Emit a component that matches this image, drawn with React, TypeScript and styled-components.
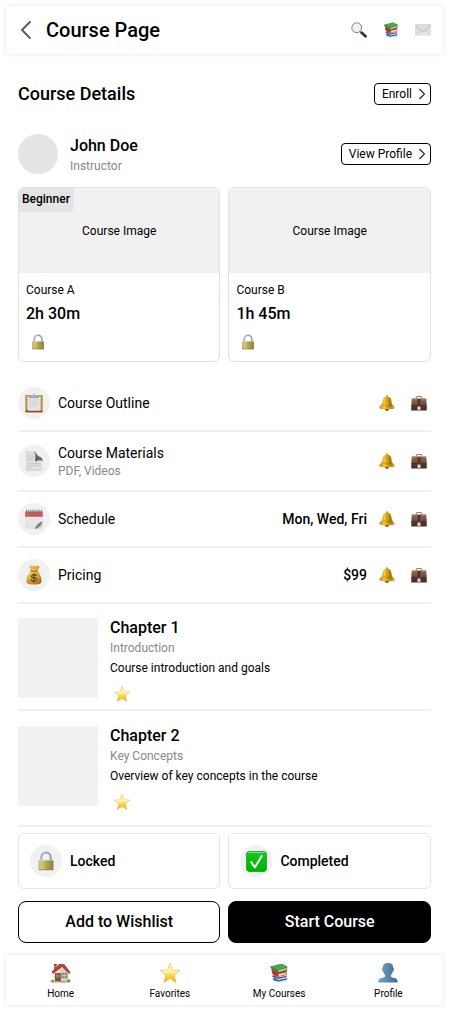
import React from "react";
import styled, { createGlobalStyle } from "styled-components";

const GlobalStyle = createGlobalStyle`
  * { box-sizing: border-box; }
  body { margin: 0; background: #fff; font-family: Roboto, "Liberation Sans", sans-serif; color: #000; }
  button { font-family: inherit; color: inherit; cursor: pointer; }
  svg { display: block; flex: none; }
`;

/* ---------- icons ---------- */

type IconProps = { size?: number };

const Icon = ({ size = 16, children }: IconProps & { children: React.ReactNode }) => (
  <svg width={size} height={size} viewBox="0 0 32 32" aria-hidden="true">
    {children}
  </svg>
);

const SearchIcon = ({ size }: IconProps) => (
  <Icon size={size}>
    <path d="M18.5 19.5l3.5 3" stroke="#78848a" strokeWidth="3" />
    <path d="M21.5 21.5l7.5 7" stroke="#252b2e" strokeWidth="5.5" strokeLinecap="round" />
    <path d="M22 20.8l6.5 6" stroke="#69767b" strokeWidth="1.2" strokeLinecap="round" />
    <circle cx="11.5" cy="11.5" r="9.8" fill="#eef3f5" stroke="#555c60" strokeWidth="1.7" />
    <circle cx="11.5" cy="11.5" r="8.3" fill="#edf2f4" stroke="#c9d0d3" strokeWidth="1" />
    <path d="M5.5 10a6.5 6.5 0 0 1 6-5" stroke="#fff" strokeWidth="2" fill="none" />
  </Icon>
);

const BooksIcon = ({ size }: IconProps) => (
  <Icon size={size}>
    <path d="M7 26l7 2 15-2v3l-14 2.500-7-2z" fill="#dfe4ee" />
    <path d="M6 25l3-2 6 4 14-3v2.500L15 29.500l-8-2z" fill="#3c5ea6" />
    <path d="M5 20l4-2 19 1 1 4-14 3-9-3z" fill="#e6e2e6" />
    <path d="M5 21l2-2 8 4 13-2.500v2L15 25.500l-9-3z" fill="#3b57a3" />
    <path d="M4 11l4-2 20 3 .5 2v5L15 22l-9-4z" fill="#dd392a" />
    <path d="M15 18l13-3v3l-13 3z" fill="#ece6e3" />
    <path d="M4 11l11 6v5l-9-4z" fill="#ca2923" />
    <path d="M2 6L20 1l9 5v6l-14 4-10-6z" fill="#2d7a34" />
    <path d="M14 12.500l14-4.500v2.500l-13 4z" fill="#d9e0cb" />
    <path d="M2 5.500L20 1l10 4.500-15 6z" fill="#55a346" />
    <path d="M2 5.500l13 6v4L4 10z" fill="#3e8b36" />
  </Icon>
);

const MailIcon = ({ size }: IconProps) => (
  <Icon size={size}>
    <defs>
      <linearGradient id="mail" x1="0" y1="0" x2="0" y2="1">
        <stop stopColor="#d5d5d5" />
        <stop offset="1" stopColor="#e7e7e7" />
      </linearGradient>
    </defs>
    <rect x=".6" y="5.6" width="30.8" height="20.8" rx=".8" fill="url(#mail)" stroke="#cfcfcf" strokeWidth=".7" />
    <path d="M2 25l11-11M30 25L19 14" stroke="#bdbdbd" strokeWidth="1.1" />
    <path d="M1 6l13 12q2 1.800 4 0L31 6z" fill="#dedede" stroke="#aaa" strokeWidth="1.300" />
    <path d="M2 6.3h28" stroke="#e7e7e7" strokeWidth="1.5" />
  </Icon>
);

const LockIcon = ({ size }: IconProps) => (
  <Icon size={size}>
    <defs>
      <linearGradient id="lockBody">
        <stop stopColor="#cbbd67" />
        <stop offset=".22" stopColor="#d6cc85" />
        <stop offset=".6" stopColor="#aaa052" />
        <stop offset="1" stopColor="#8f853f" />
      </linearGradient>
    </defs>
    <path d="M8.500 17v-7a7.500 7.500 0 0 1 15 0v7" fill="none" stroke="#91a2ad" strokeWidth="3.3" />
    <path d="M7.600 15v-5a8.400 8.400 0 0 1 8-8" fill="none" stroke="#cbd6dc" strokeWidth="1.1" />
    <rect x="4" y="14.500" width="24" height="16" rx="1" fill="url(#lockBody)" />
    <path d="M4.5 15h23" stroke="#ded59b" />
    <path d="M4 18.500h24M4 22.500h24M4 26.500h24" stroke="#8e8244" strokeOpacity=".3" />
    <path d="M4.5 30h23" stroke="#7b7137" />
  </Icon>
);

const ClipboardIcon = ({ size }: IconProps) => (
  <Icon size={size}>
    <rect x="2" y="3" width="28" height="28" rx="1.4" fill="#c59149" />
    <path d="M2.500 29.500h27" stroke="#80512a" strokeWidth="2.5" />
    <path d="M5.500 5h21v23h-18l-3-2z" fill="#e6e6e7" />
    <path d="M8 11h15m-15 3h15m-15 3h15m-15 3h15m-15 3h9" stroke="#c3c5c7" strokeWidth="1" />
    <path d="M8 27.5l-2.5-4 1 5 19-.5v-2z" fill="#cfd0d1" />
    <path d="M8 5l3-2h2.500a2.600 2.600 0 0 1 5 0H21l3 2v3H8z" fill="#98a7ae" />
    <path d="M11 4.5h10" stroke="#d1d9dd" />
    <circle cx="16" cy="2.500" r="1.100" fill="#edf0f1" />
  </Icon>
);

const PageIcon = ({ size }: IconProps) => (
  <Icon size={size}>
    <defs>
      <linearGradient id="pageCurl" x1=".3" y1="1" x2=".9" y2="0">
        <stop stopColor="#323232" />
        <stop offset=".5" stopColor="#7b7b7b" />
        <stop offset="1" stopColor="#d5d5d5" />
      </linearGradient>
    </defs>
    <path d="M3 0h13l13 15v16H3z" fill="#e0e0e0" />
    <path d="M3 0h1v31H3zM3 30h26v1H3z" fill="#cacaca" />
    <path d="M6 8h9M6 11h10M6 14h8M6 20h20M6 23h20M6 26h6M6 5h3" stroke="#bebebe" strokeWidth="1" />
    <path d="M14 0c4 2 5 8 4 16 4-3 8-3 12-1-1-6-5-6-8-8-2-3-3-6-8-7z" fill="url(#pageCurl)" />
    <path d="M18 16.500c4-3 8-3 12-1.500" fill="none" stroke="#4e4e4e" strokeWidth="1.4" />
  </Icon>
);

const CalendarIcon = ({ size }: IconProps) => (
  <Icon size={size}>
    <path d="M2 3h28v24l-5 5H2z" fill="#ececec" />
    <path d="M3 12v18h18" fill="none" stroke="#d5d5d5" strokeWidth=".8" />
    <path d="M7 12v19M11 12v19M15 12v19M19 12v17M23 12v15M3 16h26M3 20h26M3 24h23M3 28h17" stroke="#d6d6d6" strokeWidth=".6" />
    <path d="M2 4h28v8H2z" fill="#c05b5b" />
    <path d="M2 11.500h28" stroke="#b24e4e" />
    <path d="M6 9h2" stroke="#f0c2c2" />
    <path d="M4 1v4m3-4v4m3-4v4m3-4v4m3-4v4m3-4v4m3-4v4m3-4v4m3-4v4" stroke="#606469" strokeWidth="1.1" />
    <path d="M30 21l-13 11h9l4-4z" fill="#d4d4d4" />
    <path d="M30 20c-5 1-10 5-13 12 6-2 11-5 13-12z" fill="#707070" />
    <path d="M29.500 22L20 29" stroke="#bababa" />
  </Icon>
);

const MoneyIcon = ({ size }: IconProps) => (
  <Icon size={size}>
    <defs>
      <radialGradient id="moneyBag" cx=".35" cy=".35" r=".8">
        <stop stopColor="#f2cc56" />
        <stop offset=".65" stopColor="#d79c29" />
        <stop offset="1" stopColor="#98651a" />
      </radialGradient>
    </defs>
    <path d="M12 9C10 6 9 4 9 2c2-2 3 1 5 0s3-1 5 0 3-2 5 0-1 5-3 7c4 4 7 10 7 16 0 6-6 6-12 6S4 31 4 25C4 19 8 13 12 9z" fill="url(#moneyBag)" />
    <path d="M10 9q6 2 12 0" fill="none" stroke="#845b1c" strokeWidth="1.8" />
    <path d="M10 8.500q6 2 12 0" fill="none" stroke="#e6bd56" strokeWidth=".8" />
    <path d="M20.500 17q-2-2-5-1.700c-4.500.500-4.500 4.600-.500 5.200l3 .5c3.500.800 3 4.500-1 5-3 .3-5-.8-6.200-2.600M16 13v15.500" fill="none" stroke="#54451f" strokeWidth="2" />
  </Icon>
);

const BellIcon = ({ size }: IconProps) => (
  <Icon size={size}>
    <defs>
      <linearGradient id="bellBody">
        <stop stopColor="#b77e10" />
        <stop offset=".32" stopColor="#f0ca38" />
        <stop offset=".5" stopColor="#d3a51a" />
        <stop offset=".75" stopColor="#a57207" />
        <stop offset="1" stopColor="#d4a52b" />
      </linearGradient>
    </defs>
    <ellipse cx="16" cy="29" rx="4" ry="2.800" fill="#926005" />
    <path d="M14 3q0-3 2-3t2 3c5 1 6.500 5 7 10 .4 5 2 7 5 9.500 2.500 2.200 1 5-2.500 5.500H4.500C1 27.500-.5 24.700 2 22.500 5 20 6.600 18 7 13c.5-5 2-9 7-10z" fill="url(#bellBody)" />
    <path d="M2 25q14 4 28 0" stroke="#e6bc38" strokeWidth="1.2" fill="none" />
    <path d="M8 20q8 2 16 0" stroke="#966504" strokeWidth=".8" fill="none" />
  </Icon>
);

const BriefcaseIcon = ({ size }: IconProps) => (
  <Icon size={size}>
    <defs>
      <linearGradient id="caseBody" x1="0" y1="0" x2="0" y2="1">
        <stop stopColor="#8f6a5a" />
        <stop offset=".45" stopColor="#76503f" />
        <stop offset=".6" stopColor="#583a30" />
        <stop offset="1" stopColor="#42291f" />
      </linearGradient>
    </defs>
    <path d="M10.500 8V4q0-1 1-1h9q1 0 1 1v4" fill="none" stroke="#9c8076" strokeWidth="2" />
    <path d="M1.500 7h29l1 14v10H.5V21z" fill="url(#caseBody)" />
    <path d="M2 8h28" stroke="#b28c7b" strokeWidth="1.3" />
    <path d="M1 21q15 3 30 0" fill="none" stroke="#3b241e" strokeWidth="1" />
    <path d="M13 8h6v14h-6z" fill="#54362b" />
    <rect x="13" y="23" width="6" height="7" rx="1" fill="#e1dfdd" stroke="#8b7d76" />
  </Icon>
);

const StarIcon = ({ size }: IconProps) => (
  <Icon size={size}>
    <defs>
      <linearGradient id="starFill" x1="0" y1="0" x2="0" y2="1">
        <stop stopColor="#ffe87d" />
        <stop offset=".4" stopColor="#fff7b9" />
        <stop offset=".62" stopColor="#ffd93e" />
        <stop offset="1" stopColor="#f7a81a" />
      </linearGradient>
    </defs>
    <path d="M16 1l4 10.600 11.500.6-9 7.300 3 11.500-9.500-6.500L6.500 31l3-11.500-9-7.300 11.500-.6z" fill="url(#starFill)" stroke="#efaa34" strokeWidth="1" strokeLinejoin="round" />
    <path d="M16 4l-3 8.500-9.500.8M16 4l3 8.500 9.500.8" fill="none" stroke="#fff8d4" strokeWidth=".7" />
  </Icon>
);

const CheckIcon = ({ size }: IconProps) => (
  <Icon size={size}>
    <defs>
      <linearGradient id="checkFill" x1="0" y1="0" x2="0" y2="1">
        <stop stopColor="#1fc51d" />
        <stop offset=".5" stopColor="#04bc0b" />
        <stop offset="1" stopColor="#00b500" />
      </linearGradient>
    </defs>
    <rect x=".5" y=".5" width="31" height="31" rx="5.500" fill="url(#checkFill)" stroke="#079614" strokeWidth="1" />
    <path d="M4 2.400h24" stroke="#9ce89b" strokeWidth="1.3" strokeLinecap="round" />
    <path d="M8 17l5.500 8L24 7.500" fill="none" stroke="#fff" strokeWidth="3" strokeLinecap="round" strokeLinejoin="round" />
  </Icon>
);

const HouseIcon = ({ size }: IconProps) => (
  <Icon size={size}>
    <path d="M5 2h4v10H5z" fill="#a86654" />
    <path d="M4.500 1.500h5v2h-5z" fill="#784538" />
    <path d="M4 15L15 7l13 9v14H4z" fill="#e7cda5" />
    <path d="M4 15l11-8v23H4z" fill="#f0dfbe" />
    <path d="M1 14L13 2h8l10 13-2 2-11-11L3 17z" fill="#98302f" />
    <path d="M13 2h8l9 12h-5L16 5 3 16l-1-2z" fill="#b8433e" />
    <rect x="7" y="17" width="8" height="13" fill="#854e37" stroke="#62372a" />
    <rect x="8.500" y="18.500" width="2" height="5" fill="#79aed0" />
    <rect x="12" y="18.500" width="1.800" height="5" fill="#79aed0" />
    <rect x="17.500" y="16.500" width="8" height="7" fill="#69afdc" stroke="#846348" />
    <path d="M21.500 17v6m-4-3h8" stroke="#d3e5ee" strokeWidth=".7" />
    <path d="M3 30h26" stroke="#b4a398" strokeWidth="2" />
    <circle cx="2.500" cy="29" r="2.200" fill="#5f9c3c" />
    <circle cx="28.500" cy="28.500" r="2.700" fill="#5f9c3c" />
    <path d="M16 30h9" stroke="#b9a98e" strokeWidth="3" />
  </Icon>
);

const PersonIcon = ({ size }: IconProps) => (
  <Icon size={size}>
    <defs>
      <linearGradient id="personFill">
        <stop stopColor="#75a6d0" />
        <stop offset=".55" stopColor="#5683aa" />
        <stop offset="1" stopColor="#446e92" />
      </linearGradient>
    </defs>
    <path d="M16 0c6 0 8.500 3 8.500 8 2 1 1 5-1 6-.7 3-2 4-3 5 0 4 2 4 6 5 4 1 5 3 5 7H.5c0-4 1-6 5-7 4-1 6-1 6-5-1-1-2.300-2-3-5-2-1-3-5-1-6C7.500 3 10 0 16 0z" fill="url(#personFill)" />
  </Icon>
);

const BackIcon = () => (
  <svg width="12" height="20" viewBox="0 0 12 20" fill="none" aria-hidden="true">
    <path d="M10.500 1.300L2 10l8.500 8.700" stroke="#555" strokeWidth="1.900" />
  </svg>
);

const Chevron = () => (
  <svg width="6" height="12" viewBox="0 0 6 12" fill="none" aria-hidden="true">
    <path d="M.5 1l5 5-5 5" stroke="#222" strokeWidth="1.150" />
  </svg>
);

/* ---------- layout ---------- */

const Page = styled.div`
  width: 449px;
  height: 1011px;
  padding: 6px;
  display: flex;
  flex-direction: column;
`;

const Header = styled.header`
  width: 437px;
  height: 48px;
  padding: 0 12px 0 14px;
  display: flex;
  align-items: center;
  gap: 14px;
  box-shadow: 0 0 5px rgba(0, 0, 0, 0.1);
`;

const PageTitle = styled.h1`
  margin: 0;
  flex: 1;
  font-size: 20px;
  line-height: 24px;
  font-weight: 500;
`;

const HeaderActions = styled.div`
  display: flex;
  gap: 16px;
`;

const Main = styled.main`
  flex: 1;
  width: 437px;
  padding: 0 12px;
  display: flex;
  flex-direction: column;
`;

const SectionBar = styled.div`
  height: 80px;
  display: flex;
  align-items: center;
  justify-content: space-between;
`;

const SectionTitle = styled.h2`
  margin: 0;
  font-size: 18px;
  line-height: 24px;
  font-weight: 500;
`;

const OutlineButton = styled.button`
  height: 22px;
  padding: 0 5px 0 7px;
  display: flex;
  align-items: center;
  gap: 7px;
  border: 1px solid #000;
  border-radius: 4px;
  background: #fff;
  font-size: 12px;
  line-height: 16px;
`;

const Instructor = styled.section`
  height: 40px;
  margin-bottom: 13px;
  display: flex;
  align-items: center;
  gap: 12px;
`;

const Avatar = styled.div`
  width: 40px;
  height: 40px;
  border-radius: 50%;
  background: #e4e4e4;
`;

const Grow = styled.div`
  flex: 1;
`;

const Name = styled.div`
  font-size: 16px;
  line-height: 24px;
  font-weight: 500;
`;

const Muted = styled.div`
  font-size: 12px;
  line-height: 16px;
  color: #888;
`;

const TwoColumns = styled.div`
  display: grid;
  grid-template-columns: 202.4px 1fr;
  gap: 8px;
`;

const CourseCard = styled.article`
  position: relative;
  height: 175px;
  border: 1px solid #e2e2e2;
  border-radius: 6px;
  overflow: hidden;
`;

const CourseImage = styled.div`
  height: 85px;
  display: flex;
  align-items: center;
  justify-content: center;
  background: #f1f1f1;
  font-size: 12px;
`;

const Badge = styled.span`
  position: absolute;
  top: 0;
  left: 0;
  height: 24px;
  padding: 0 4px 0 3px;
  border-bottom-right-radius: 6px;
  background: #e4e4e4;
  font-size: 12px;
  line-height: 23px;
  font-weight: 500;
`;

const CourseInfo = styled.div`
  padding: 9px 7px 7px;
`;

const CourseName = styled.div`
  font-size: 12px;
  line-height: 16px;
`;

const Duration = styled.div`
  margin: 4px 0 8px;
  font-size: 16px;
  line-height: 24px;
  font-weight: 500;
`;

const CardLock = styled.div`
  padding-left: 4px;
`;

const List = styled.div`
  margin-top: 14px;
`;

const ListRow = styled.div<{ $tall?: boolean }>`
  height: ${(p) => (p.$tall ? 60 : 56)}px;
  padding-right: 4px;
  display: flex;
  align-items: center;
  border-bottom: 2px solid #f0f0f0;
`;

const IconCircle = styled.div`
  width: 32px;
  height: 32px;
  margin-right: 8px;
  display: flex;
  align-items: center;
  justify-content: center;
  border-radius: 50%;
  background: #f1f1f1;
`;

const RowLabel = styled.div`
  font-size: 14px;
  line-height: 20px;
`;

const RowValue = styled.div`
  font-size: 14px;
  line-height: 20px;
  font-weight: 500;
`;

const RowActions = styled.div`
  margin-left: 12px;
  display: flex;
  gap: 16px;
`;

const Chapter = styled.article<{ $height: number; $top: number }>`
  height: ${(p) => p.$height}px;
  padding-top: ${(p) => p.$top}px;
  display: flex;
  align-items: flex-start;
  gap: 12px;
  border-bottom: 2px solid #f0f0f0;
`;

const Thumbnail = styled.div`
  width: 80px;
  height: 80px;
  background: #f1f1f1;
`;

const ChapterText = styled.div`
  display: flex;
  flex-direction: column;
  margin-top: -2px;
`;

const ChapterSummary = styled.div`
  margin: 4px 0 10px;
  font-size: 12px;
  line-height: 16px;
`;

const ChapterMark = styled.div`
  padding-left: 4px;
`;

const StatusCard = styled.div`
  height: 56px;
  padding: 0 11px;
  display: flex;
  align-items: center;
  border: 1px solid #e4e4e4;
  border-radius: 6px;
`;

const Statuses = styled(TwoColumns)`
  margin: 6px 0 12px;
`;

const ActionButton = styled.button<{ $primary?: boolean }>`
  height: 42px;
  padding: 0;
  border: 1px solid #000;
  border-radius: 8px;
  background: ${(p) => (p.$primary ? "#000" : "#fff")};
  color: ${(p) => (p.$primary ? "#fff" : "#000")};
  font-size: 16px;
  line-height: 24px;
  font-weight: 500;
  padding-bottom: 1px;
`;

const BottomNav = styled.nav`
  width: 437px;
  height: 50px;
  display: grid;
  grid-template-columns: repeat(4, 1fr);
  box-shadow: 0 0 5px rgba(0, 0, 0, 0.1);
`;

const NavItem = styled.a`
  padding-top: 8px;
  display: flex;
  flex-direction: column;
  align-items: center;
  gap: 4px;
  font-size: 10px;
  line-height: 14px;
`;

const rows = [
  { label: "Course Outline", icon: <ClipboardIcon size={20} /> },
  { label: "Course Materials", note: "PDF, Videos", icon: <PageIcon size={20} /> },
  { label: "Schedule", value: "Mon, Wed, Fri", icon: <CalendarIcon size={20} /> },
  { label: "Pricing", value: "$99", icon: <MoneyIcon size={20} /> },
];

const courses = [
  { name: "Course A", time: "2h 30m", level: "Beginner" },
  { name: "Course B", time: "1h 45m" },
];

const chapters = [
  { title: "Chapter 1", topic: "Introduction", text: "Course introduction and goals", height: 107, top: 14 },
  { title: "Chapter 2", topic: "Key Concepts", text: "Overview of key concepts in the course", height: 116, top: 15 },
];

export default function App() {
  return (
    <Page>
      <GlobalStyle />
      <Header>
        <BackIcon />
        <PageTitle>Course Page</PageTitle>
        <HeaderActions>
          <SearchIcon />
          <BooksIcon />
          <MailIcon />
        </HeaderActions>
      </Header>
      <Main>
        <SectionBar>
          <SectionTitle>Course Details</SectionTitle>
          <OutlineButton>
            Enroll <Chevron />
          </OutlineButton>
        </SectionBar>
        <Instructor>
          <Avatar />
          <Grow>
            <Name>John Doe</Name>
            <Muted>Instructor</Muted>
          </Grow>
          <OutlineButton>
            View Profile <Chevron />
          </OutlineButton>
        </Instructor>
        <TwoColumns>
          {courses.map((c) => (
            <CourseCard key={c.name}>
              <CourseImage>Course Image</CourseImage>
              {c.level && <Badge>{c.level}</Badge>}
              <CourseInfo>
                <CourseName>{c.name}</CourseName>
                <Duration>{c.time}</Duration>
                <CardLock>
                  <LockIcon size={16} />
                </CardLock>
              </CourseInfo>
            </CourseCard>
          ))}
        </TwoColumns>
        <List>
          {rows.map((r) => (
            <ListRow key={r.label} $tall={!!r.note}>
              <IconCircle>{r.icon}</IconCircle>
              <Grow>
                <RowLabel>{r.label}</RowLabel>
                {r.note && <Muted>{r.note}</Muted>}
              </Grow>
              {r.value && <RowValue>{r.value}</RowValue>}
              <RowActions>
                <BellIcon />
                <BriefcaseIcon />
              </RowActions>
            </ListRow>
          ))}
        </List>
        {chapters.map((c) => (
          <Chapter key={c.title} $height={c.height} $top={c.top}>
            <Thumbnail />
            <ChapterText>
              <Name>{c.title}</Name>
              <Muted>{c.topic}</Muted>
              <ChapterSummary>{c.text}</ChapterSummary>
              <ChapterMark>
                <StarIcon />
              </ChapterMark>
            </ChapterText>
          </Chapter>
        ))}
        <Statuses>
          <StatusCard>
            <IconCircle>
              <LockIcon size={20} />
            </IconCircle>
            <RowValue>Locked</RowValue>
          </StatusCard>
          <StatusCard>
            <IconCircle>
              <CheckIcon size={21} />
            </IconCircle>
            <RowValue>Completed</RowValue>
          </StatusCard>
        </Statuses>
        <TwoColumns>
          <ActionButton>Add to Wishlist</ActionButton>
          <ActionButton $primary>Start Course</ActionButton>
        </TwoColumns>
      </Main>
      <BottomNav>
        <NavItem>
          <HouseIcon size={20} />
          Home
        </NavItem>
        <NavItem>
          <StarIcon size={20} />
          Favorites
        </NavItem>
        <NavItem>
          <BooksIcon size={20} />
          My Courses
        </NavItem>
        <NavItem>
          <PersonIcon size={20} />
          Profile
        </NavItem>
      </BottomNav>
    </Page>
  );
}
